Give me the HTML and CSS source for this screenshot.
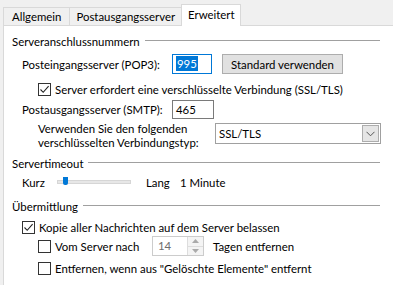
FILE: index.html
```html
<html>
<head>
<meta charset="utf-8">
<link rel="stylesheet" href="styles.css">
</head>
<body>
<div id="tabs">
  <div class="tab tab_first">Allgemein</div>
  <div class="tab tab_mid">Postausgangsserver</div>
  <div class="tab tab_active">Erweitert</div>
</div>
<div id="panel">

  <div class="group_title g1"><span>Serveranschlussnummern</span><div class="rule"></div></div>
  <div class="group">
    <div class="row r_pop">
      <label class="lbl">Posteingangsserver (POP3):</label>
      <div class="field f_pop focused"><span class="sel">995</span></div>
      <button class="btn">Standard verwenden</button>
    </div>
    <div class="row r_ssl sub">
      <span class="cb"><svg width="11" height="11" viewBox="0 0 11 11"><path d="M1.5 5.5 L4.2 8.3 L9.6 2.2" fill="none" stroke="#222" stroke-width="1.1"/></svg></span>
      <span>Server erfordert eine verschlüsselte Verbindung (SSL/TLS)</span>
    </div>
    <div class="row r_smtp">
      <label class="lbl">Postausgangsserver (SMTP):</label>
      <div class="field f_smtp">465</div>
    </div>
    <div class="row r_type sub">
      <label class="lbl2">Verwenden Sie den folgenden<br>verschlüsselten Verbindungstyp:</label>
      <div class="combo">
        <span>SSL/TLS</span>
        <span class="combo_btn"><svg width="9" height="6" viewBox="0 0 9 6"><path d="M0.5 0.8 L4.5 4.8 L8.5 0.8" fill="none" stroke="#555" stroke-width="1"/></svg></span>
      </div>
    </div>
  </div>

  <div class="group_title g2"><span>Servertimeout</span><div class="rule"></div></div>
  <div class="group">
    <div class="slider_row">
      <span class="kurz">Kurz</span>
      <span class="track"><span class="thumb"></span></span>
      <span class="lang">Lang</span>
      <span class="minute">1 Minute</span>
    </div>
  </div>

  <div class="group_title g3"><span>Übermittlung</span><div class="rule"></div></div>
  <div class="group">
    <div class="row r_copy">
      <span class="cb"><svg width="11" height="11" viewBox="0 0 11 11"><path d="M1.5 5.5 L4.2 8.3 L9.6 2.2" fill="none" stroke="#222" stroke-width="1.1"/></svg></span>
      <span>Kopie aller Nachrichten auf dem Server belassen</span>
    </div>
    <div class="row r_days sub">
      <span class="cb"></span>
      <span class="vom">Vom Server nach</span>
      <div class="spin">
        <span class="spin_val">14</span>
        <span class="spin_btns">
          <span class="spin_up"><svg width="7" height="4" viewBox="0 0 7 4"><path d="M0 4 L3.5 0 L7 4Z" fill="#aaa"/></svg></span>
          <span class="spin_down"><svg width="7" height="4" viewBox="0 0 7 4"><path d="M0 0 L3.5 4 L7 0Z" fill="#aaa"/></svg></span>
        </span>
      </div>
      <span class="tagen">Tagen entfernen</span>
    </div>
    <div class="row r_del sub">
      <span class="cb"></span>
      <span>Entfernen, wenn aus "Gelöschte Elemente" entfernt</span>
    </div>
  </div>

</div>
</body>
</html>
```

FILE: styles.css
```css
body{
  margin: 0;
  background-color: #f0f0f0;
  font-family: Lato, "Liberation Sans", sans-serif;
  font-size: 11.4px;
  color: #000;
  overflow: hidden;
}

#tabs{
  display: flex;
  align-items: flex-end;
  height: 25px;
  padding-left: 3px;
}
.tab{
  height: 17px;
  line-height: 17px;
  padding: 0 7px;
  border: 1px solid #d9d9d9;
  border-bottom: none;
  margin-right: -1px;
  background-color: #f0f0f0;
}
.tab_first{ padding: 0 8px; }
.tab_mid{ padding: 0 6px; }
.tab_active{
  height: 21px;
  line-height: 19px;
  padding: 0 5px 0 6px;
  margin-bottom: -1px;
  background-color: #fff;
  position: relative;
  z-index: 1;
}

#panel{
  margin-left: 3px;
  height: 260px;
  background-color: #fff;
  border-top: 1px solid #d9d9d9;
  border-left: 1px solid #d9d9d9;
  padding-left: 8px;
  padding-right: 13px;
}

.group_title{
  display: flex;
  align-items: center;
  height: 16px;
}
.group_title .rule{
  flex: 1;
  border-top: 1px solid #a0a0a0;
  margin-left: 5px;
  margin-top: -1px;
}
.g1{ padding-top: 7px; }
.g2{ margin-top: 5px; }
.g3{ margin-top: 8px; }

.group{
  padding-left: 10px;
}
.row{
  display: flex;
  align-items: center;
  white-space: nowrap;
}
.row > *{
  flex-shrink: 0;
}
.sub{
  padding-left: 16px;
}

.lbl{
  width: 150px;
}
.field{
  box-sizing: border-box;
  height: 20px;
  border: 1px solid #7a7a7a;
  padding-left: 3px;
  line-height: 18px;
}
.focused{
  border-color: #0078d7;
}
.sel{
  background-color: #0078d7;
  color: #fff;
  padding: 1px 1px;
}
.btn{
  box-sizing: border-box;
  margin-left: 10px;
  width: 121px;
  height: 20px;
  padding: 0;
  border: 1px solid #adadad;
  background-color: #e1e1e1;
  font-family: inherit;
  font-size: inherit;
  color: #000;
}

.r_pop{ margin-top: 5px; height: 20px; }
.f_pop{ width: 40px; }
.r_ssl{ margin-top: 7px; height: 16px; }
.r_smtp{ margin-top: 2px; height: 20px; }
.f_smtp{ width: 42px; height: 19px; }

.cb{
  box-sizing: border-box;
  width: 13px;
  height: 13px;
  border: 1px solid #333;
  margin-right: 4px;
  display: flex;
  align-items: center;
  justify-content: center;
}

.r_type{
  margin-top: 3px;
  height: 28px;
  align-items: flex-start;
}
.lbl2{
  width: 177px;
  line-height: 14px;
}
.combo{
  box-sizing: border-box;
  margin-top: 1px;
  width: 166px;
  height: 21px;
  border: 1px solid #a0a0a0;
  display: flex;
  align-items: center;
  justify-content: space-between;
  padding-left: 3px;
  padding-right: 1px;
}
.combo_btn{
  box-sizing: border-box;
  width: 17px;
  height: 17px;
  border: 1px solid #adadad;
  background-color: #e5e5e5;
  display: flex;
  align-items: center;
  justify-content: center;
}

.slider_row{
  margin-top: 3px;
  height: 16px;
  display: grid;
  grid-template-columns: 35px 74px 15px 34px auto;
  align-items: center;
  white-space: nowrap;
}
.track{
  grid-column: 2;
  box-sizing: border-box;
  width: 74px;
  height: 4px;
  background-color: #e7e7e7;
  border: 1px solid #d6d6d6;
  position: relative;
}
.thumb{
  position: absolute;
  left: 5px;
  top: -4px;
  width: 5px;
  height: 8px;
  background-color: #0078d7;
  border-radius: 0 0 2px 2px;
}
.lang{ grid-column: 4; }
.minute{ grid-column: 5; }

.r_copy{ margin-top: 5px; height: 16px; }
.r_days{ margin-top: 1px; height: 20px; }
.vom{ width: 97px; }
.spin{
  box-sizing: border-box;
  width: 52px;
  height: 20px;
  border: 1px solid #ccc;
  display: flex;
  justify-content: space-between;
  padding-left: 5px;
}
.spin_val{
  color: #6d6d6d;
  line-height: 18px;
}
.spin_btns{
  width: 15px;
  display: flex;
  flex-direction: column;
  border-left: 1px solid #ddd;
}
.spin_up, .spin_down{
  flex: 1;
  display: flex;
  align-items: center;
  justify-content: center;
  background-color: #f4f4f4;
}
.spin_up{ border-bottom: 1px solid #ddd; }
.tagen{ margin-left: 9px; }
.r_del{ margin-top: 4px; height: 16px; }
```
